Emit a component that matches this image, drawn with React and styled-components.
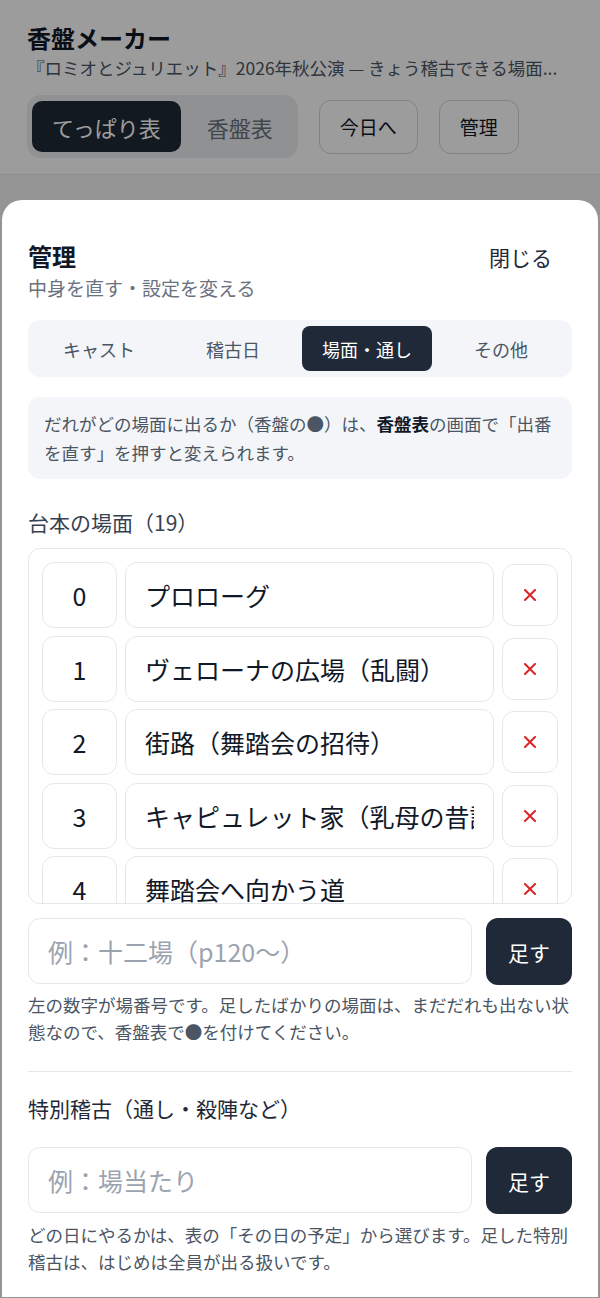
import React from 'react';
import styled, {createGlobalStyle} from 'styled-components';

const GlobalStyle = createGlobalStyle`
  * { box-sizing: border-box; }
  html, body {
    margin: 0;
    padding: 0;
    background: #f3f4f6;
    font-family: "Noto Sans CJK JP", "Noto Sans", sans-serif;
    color: #111827;
  }
  input, button { font-family: inherit; }
`;

const Page = styled.div`
  min-height: 1298px;
`;

const Header = styled.header`
  background: #ffffff;
  padding: 22px 27px 16px;
  border-bottom: 1px solid #e5e7eb;
`;

const AppTitle = styled.h1`
  margin: 0;
  font-size: 24px;
  line-height: 32px;
  font-weight: 700;
  color: #111827;
`;

const AppSub = styled.div`
  margin-top: 2px;
  font-size: 17.5px;
  line-height: 24px;
  color: #4b5563;
  white-space: nowrap;
  overflow: hidden;
  text-overflow: ellipsis;
`;

const Toolbar = styled.div`
  display: flex;
  align-items: center;
  gap: 21px;
  margin-top: 15px;
`;

const Segment = styled.div`
  display: flex;
  gap: 6px;
  padding: 6px 5px;
  background: #eceef1;
  border-radius: 14px;
`;

const SegButton = styled.button`
  height: 51px;
  padding: 0 20px;
  border: none;
  border-radius: 10px;
  font-size: 22px;
  background: ${(p) => (p.$active ? '#1f2937' : 'transparent')};
  color: ${(p) => (p.$active ? '#ffffff' : '#6b7280')};
`;

const OutlineButton = styled.button`
  height: 54px;
  padding: 0 20px;
  background: #ffffff;
  border: 1.5px solid #d1d5db;
  border-radius: 12px;
  font-size: 19px;
  color: #111827;
`;

const Overlay = styled.div`
  position: fixed;
  inset: 0;
  background: rgba(0, 0, 0, 0.39);
  display: flex;
  flex-direction: column;
  padding-top: 200px;
`;

const Sheet = styled.section`
  flex: 1;
  margin: 0 2px 1px;
  background: #ffffff;
  border-radius: 20px 20px 0 0;
  padding: 40px 26px 24px;
  overflow: hidden;
`;

const SheetHead = styled.div`
  display: flex;
  justify-content: space-between;
  align-items: flex-start;
  margin-bottom: 19px;
`;

const SheetTitle = styled.h2`
  margin: 0;
  font-size: 24px;
  line-height: 32px;
  font-weight: 700;
  color: #111827;
`;

const SheetSub = styled.div`
  margin-top: 3px;
  font-size: 19px;
  line-height: 26px;
  color: #6b7280;
`;

const CloseButton = styled.button`
  border: none;
  background: transparent;
  font-size: 21px;
  line-height: 28px;
  padding: 3px 20px;
  color: #1f2937;
`;

const Tabs = styled.div`
  display: grid;
  grid-template-columns: repeat(4, 1fr);
  gap: 4px;
  padding: 6px;
  background: #f3f5f8;
  border-radius: 12px;
`;

const Tab = styled.button`
  height: 45px;
  border: none;
  border-radius: 8px;
  font-size: 18px;
  background: ${(p) => (p.$active ? '#1f2937' : 'transparent')};
  color: ${(p) => (p.$active ? '#ffffff' : '#4b5563')};
`;

const InfoBox = styled.p`
  margin: 20px 0 0;
  padding: 12px 16px;
  background: #f3f5f8;
  border-radius: 12px;
  font-size: 17.5px;
  line-height: 29px;
  color: #4b5563;

  strong {
    color: #111827;
    font-weight: 700;
  }
`;

const SectionLabel = styled.h3`
  margin: ${(p) => p.$margin};
  font-size: 21px;
  line-height: 28px;
  font-weight: 400;
  color: ${(p) => p.$color};
`;

const SceneList = styled.div`
  height: 356px;
  overflow-y: auto;
  scrollbar-width: none;
  border: 1px solid #e5e7eb;
  border-radius: 12px;
  padding: 13px;
  display: flex;
  flex-direction: column;
  gap: 7.5px;
`;

const SceneRow = styled.div`
  display: grid;
  grid-template-columns: 75px 1fr 56px;
  gap: 8px;
  align-items: center;
  flex-shrink: 0;
`;

const Field = styled.input`
  height: 66px;
  width: 100%;
  min-width: 0;
  border: 1px solid #e5e7eb;
  border-radius: 12px;
  background: #ffffff;
  font-size: 25px;
  color: #111827;
  padding: 0 ${(p) => (p.$center ? '0' : '19px')};
  text-align: ${(p) => (p.$center ? 'center' : 'left')};
  outline: none;

  &::placeholder {
    color: #9ca3af;
  }
`;

const RemoveButton = styled.button`
  height: 62px;
  border: 1px solid #e5e7eb;
  border-radius: 12px;
  background: #ffffff;
  padding: 0;
  display: flex;
  align-items: center;
  justify-content: center;
`;

const CrossIcon = () => (
  <svg width="12" height="12" viewBox="0 0 12 12" aria-label="削除">
    <path d="M1 1 L11 11 M11 1 L1 11" stroke="#dc2626" strokeWidth="2" strokeLinecap="square" fill="none" />
  </svg>
);

const AddRow = styled.div`
  display: flex;
  gap: 14px;
  margin-top: ${(p) => p.$top};
`;

const AddButton = styled.button`
  flex: 0 0 86px;
  height: 67px;
  border: none;
  border-radius: 12px;
  background: #1f2937;
  color: #ffffff;
  font-size: 21px;
`;

const Help = styled.p`
  margin: ${(p) => p.$top} 0 0;
  font-size: 17.5px;
  line-height: 27px;
  color: #4b5563;
`;

const Divider = styled.hr`
  margin: 26px 0 0;
  border: none;
  border-top: 1.5px solid #e5e7eb;
`;

const scenes = [
  'プロローグ',
  'ヴェローナの広場（乱闘）',
  '街路（舞踏会の招待）',
  'キャピュレット家（乳母の昔話）',
  '舞踏会へ向かう道',
  'キャピュレット家の舞踏会',
  'バルコニー',
  'ロレンス神父の庵',
  '街路（乳母の使い）',
  '秘密の結婚',
  '広場の決闘',
  'ジュリエットの部屋',
  'ロレンス神父の庵（追放）',
  '別れの朝',
  '縁談',
  '眠り薬',
  'マンチュア',
  '霊廟',
  'エピローグ',
];

const tabs = ['キャスト', '稽古日', '場面・通し', 'その他'];

export default function App() {
  return (
    <Page>
      <GlobalStyle />
      <Header>
        <AppTitle>香盤メーカー</AppTitle>
        <AppSub>『ロミオとジュリエット』2026年秋公演 — きょう稽古できる場面...</AppSub>
        <Toolbar>
          <Segment>
            <SegButton $active>てっぱり表</SegButton>
            <SegButton>香盤表</SegButton>
          </Segment>
          <OutlineButton>今日へ</OutlineButton>
          <OutlineButton>管理</OutlineButton>
        </Toolbar>
      </Header>

      <Overlay>
        <Sheet>
          <SheetHead>
            <div>
              <SheetTitle>管理</SheetTitle>
              <SheetSub>中身を直す・設定を変える</SheetSub>
            </div>
            <CloseButton>閉じる</CloseButton>
          </SheetHead>

          <Tabs>
            {tabs.map((t) => (
              <Tab key={t} $active={t === '場面・通し'}>
                {t}
              </Tab>
            ))}
          </Tabs>

          <InfoBox>
            だれがどの場面に出るか（香盤の●）は、<strong>香盤表</strong>の画面で「出番を直す」を押すと変えられます。
          </InfoBox>

          <SectionLabel $margin="29px 0 12px" $color="#374151">
            台本の場面（{scenes.length}）
          </SectionLabel>

          <SceneList>
            {scenes.map((name, i) => (
              <SceneRow key={i}>
                <Field $center defaultValue={i} />
                <Field defaultValue={name} />
                <RemoveButton>
                  <CrossIcon />
                </RemoveButton>
              </SceneRow>
            ))}
          </SceneList>

          <AddRow $top="14px">
            <Field placeholder="例：十二場（p120〜）" />
            <AddButton>足す</AddButton>
          </AddRow>
          <Help $top="6px">
            左の数字が場番号です。足したばかりの場面は、まだだれも出ない状態なので、香盤表で●を付けてください。
          </Help>

          <Divider />

          <SectionLabel $margin="22px 0 25px" $color="#1f2937">
            特別稽古（通し・殺陣など）
          </SectionLabel>
          <AddRow $top="0">
            <Field placeholder="例：場当たり" />
            <AddButton>足す</AddButton>
          </AddRow>
          <Help $top="7px">
            どの日にやるかは、表の「その日の予定」から選びます。足した特別稽古は、はじめは全員が出る扱いです。
          </Help>
        </Sheet>
      </Overlay>
    </Page>
  );
}
